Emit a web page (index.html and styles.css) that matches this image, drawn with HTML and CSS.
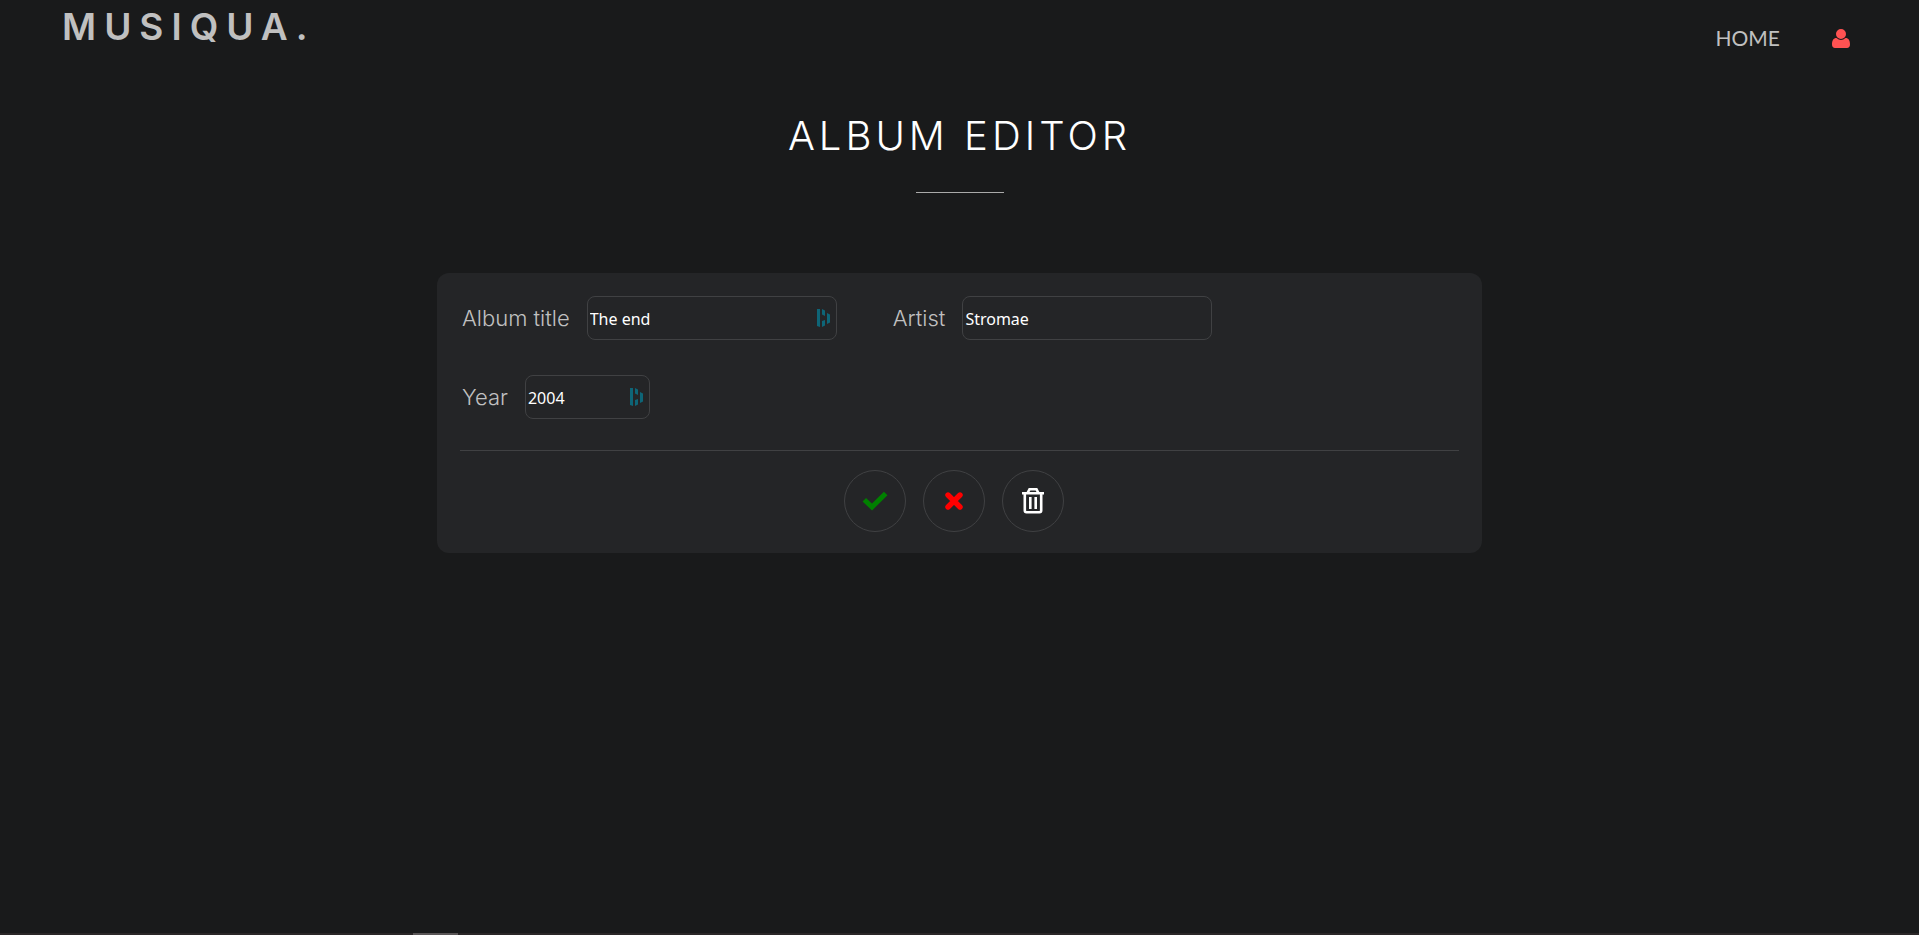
FILE: index.html
```html
<!DOCTYPE html>
<html lang="en">
<head>
<meta charset="utf-8">
<meta name="viewport" content="width=device-width, initial-scale=1">
<title>Musiqua – Album editor</title>
<link rel="stylesheet" href="styles.css">
</head>
<body>
<header class="topbar">
  <a class="logo" href="#">MUSIQUA.</a>
  <nav class="nav">
    <a class="nav-link" href="#">HOME</a>
    <a class="nav-user" href="#" aria-label="Account">
      <svg width="18" height="19" viewBox="0 0 18 19"><path fill="currentColor" d="M9 0a5 5 0 0 1 0 10A5 5 0 0 1 9 0ZM4.500 9C6 10.300 7.400 11 9 11s3-.7 4.500-2C16.600 9 18 11.500 18 15.500c0 2-1.200 3.500-3 3.500H3c-1.800 0-3-1.500-3-3.500C0 11.500 1.400 9 4.500 9Z"/></svg>
    </a>
  </nav>
</header>
<main class="page">
  <h1 class="title">ALBUM EDITOR</h1>
  <form class="card">
    <div class="fields">
      <div class="field">
        <label for="album">Album title</label>
        <div class="control">
          <input class="input" id="album" type="text" value="The end">
          <svg class="mark" width="14" height="18" viewBox="0 0 14 18"><path fill="currentColor" d="M0 0h3v18l-3-1ZM5 0l3 1.500V7L5 5.500ZM5 12l3-1v5.500L5 18ZM10 4l3 1.500v8L10 15Z"/></svg>
        </div>
      </div>
      <div class="field">
        <label for="artist">Artist</label>
        <div class="control"><input class="input" id="artist" type="text" value="Stromae"></div>
      </div>
    </div>
    <div class="fields">
      <div class="field">
        <label for="year">Year</label>
        <div class="control">
          <input class="input input-short" id="year" type="text" value="2004">
          <svg class="mark" width="14" height="18" viewBox="0 0 14 18"><path fill="currentColor" d="M0 0h3v18l-3-1ZM5 0l3 1.500V7L5 5.500ZM5 12l3-1v5.500L5 18ZM10 4l3 1.500v8L10 15Z"/></svg>
        </div>
      </div>
    </div>
    <div class="actions">
      <button class="round ok" type="button" aria-label="Save">
        <svg width="26" height="20" viewBox="0 0 26 20"><path fill="none" stroke="currentColor" stroke-width="5" d="M2.300 8.700 10 16 23.700 2.400"/></svg>
      </button>
      <button class="round cancel" type="button" aria-label="Cancel">
        <svg width="18" height="18" viewBox="0 0 18 18"><path fill="none" stroke="currentColor" stroke-width="5.400" stroke-linecap="round" d="m3 3 12 12M15 3 3 15"/></svg>
      </button>
      <button class="round delete" type="button" aria-label="Delete">
        <svg width="22" height="26" viewBox="0 0 22 26"><path fill="none" stroke="currentColor" stroke-width="2.600" d="M0 5.300h22M5.500 5 7.500 1.300h7L16.500 5M2.800 5v17.500q0 1.700 1.700 1.700h13q1.700 0 1.700-1.700V5"/><path fill="none" stroke="currentColor" stroke-width="2.600" d="M8.300 9v12M13.700 9v12"/></svg>
      </button>
    </div>
  </form>
</main>
<div class="scroll"><div class="scroll-thumb"></div></div>
</body>
</html>
```
FILE: styles.css
```css
* { box-sizing: border-box; }
body {
  margin: 0;
  min-height: 100vh;
  display: flex;
  flex-direction: column;
  background: #191a1b;
  color: #c0c0c0;
  font-family: Inter, "Liberation Sans", sans-serif;
}
svg { display: block; }
a { color: inherit; text-decoration: none; }
.topbar {
  display: flex;
  justify-content: space-between;
  align-items: flex-start;
  padding: 4px 69px 0 62px;
}
.logo {
  font-size: 37px;
  line-height: 46px;
  font-weight: 600;
  letter-spacing: 8px;
}
.nav {
  display: flex;
  align-items: center;
  gap: 52px;
  padding-top: 20px;
}
.nav-link {
  font-family: Lato, sans-serif;
  font-size: 21px;
  line-height: 28px;
}
.nav-user { color: #ff5252; }
.page { flex: 1; }
.title {
  margin: 60px 0 80px;
  display: flex;
  flex-direction: column;
  align-items: center;
  gap: 32px;
  color: #fff;
  font-size: 40px;
  line-height: 48px;
  font-weight: 300;
  letter-spacing: 4px;
}
.title::after {
  content: "";
  width: 88px;
  height: 1px;
  background: #aaa;
}
.card {
  width: 1045px;
  max-width: 90%;
  margin: 0 auto;
  padding: 23px 23px 21px;
  border-radius: 12px;
  background: #242527;
}
.fields {
  display: flex;
  flex-wrap: wrap;
  gap: 56px;
  padding-left: 2px;
  margin-bottom: 35px;
}
.field {
  display: flex;
  align-items: center;
  gap: 17px;
}
.field label {
  font-size: 22px;
  line-height: 28px;
  font-weight: 300;
}
.control { position: relative; }
.input {
  display: block;
  width: 250px;
  height: 44px;
  padding: 3px 2px 2px;
  border: 1px solid #404143;
  border-radius: 8px;
  background: transparent;
  color: #fff;
  font-family: "Noto Sans", sans-serif;
  font-size: 16px;
}
.input-short { width: 125px; }
.mark {
  position: absolute;
  right: 6px;
  top: 13px;
  color: #0e6577;
}
.actions {
  display: flex;
  justify-content: center;
  gap: 17px;
  margin-top: -4px;
  padding: 19px 12px 0 0;
  border-top: 1px solid #404143;
}
.round {
  display: grid;
  place-items: center;
  width: 62px;
  height: 62px;
  padding: 0;
  border: 1px solid #404143;
  border-radius: 50%;
  background: transparent;
}
.ok { color: #008000; }
.cancel { color: #f00; }
.delete { color: #fff; }
.scroll {
  height: 2px;
  padding-left: 413px;
  background: #2a2627;
}
.scroll-thumb {
  width: 45px;
  height: 2px;
  background: #5a5657;
}
```
